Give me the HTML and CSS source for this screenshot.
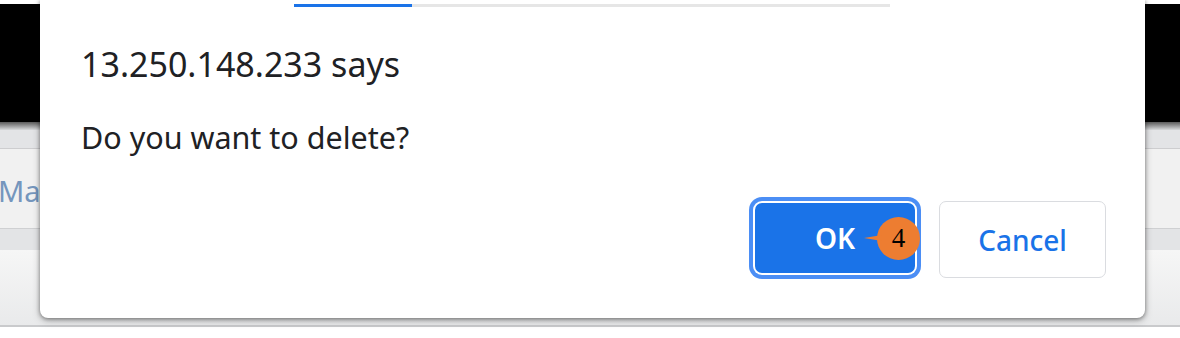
FILE: index.html
```html
<!DOCTYPE html>
<html>
<head>
    <title>Confirm</title>
    <meta charset='UTF-8'>
    <link rel="stylesheet" href="styles.css">
</head>
<body>
    <div class='page'>
        <div class='top-gap'></div>
        <div class='header-black'></div>
        <div class='header-fade'></div>
        <div class='toolbar'></div>
        <div class='tab-row'><span class='tab-label'>Manage</span></div>
        <div class='sub-band'></div>
        <div class='lower-area'></div>
        <div class='bottom-line'></div>
    </div>

    <div class='dialog'>
        <div class='progress'><div class='progress-fill'></div></div>
        <h1 class='dialog-title'>13.250.148.233 says</h1>
        <p class='dialog-msg'>Do you want to delete?</p>
        <div class='dialog-actions'>
            <button class='btn btn-ok'>OK
                <span class='step-badge'>4</span>
            </button>
            <button class='btn btn-cancel'>Cancel</button>
        </div>
    </div>
</body>
</html>
```

FILE: styles.css
```css
html, body { margin: 0; padding: 0; }
body { width: 1180px; height: 338px; overflow: hidden; background: #fff; font-family: "Noto Sans", "Open Sans", sans-serif; position: relative; }

/* page behind the dialog */
.page { display: flex; flex-direction: column; }
.top-gap { height: 4px; background: #fff; }
.header-black { height: 118px; background: #000; }
.header-fade { height: 8px; background: linear-gradient(#5a5a5a, #d9dadc); }
.toolbar { height: 18px; background: #e3e4e6; border-bottom: 1px solid #cdcdcf; }
.tab-row { height: 79px; background: #f1f1f1; border-bottom: 1px solid #cfd0d2; display: flex; align-items: center; overflow: hidden; }
.tab-label { font-size: 29px; color: #7596bd; margin-left: -2px; margin-top: 4px; white-space: nowrap; }
.sub-band { height: 21px; background: #e3e4e6; }
.lower-area { height: 75px; background: linear-gradient(#f6f6f6, #e9eaeb); }
.bottom-line { height: 2px; background: #c9cacc; }

/* alert dialog */
.dialog {
    position: absolute;
    left: 40px;
    top: 0;
    width: 1105px;
    height: 318px;
    background: #fff;
    border-radius: 0 0 8px 8px;
    box-shadow: 0 1px 4px rgba(0,0,0,0.45), 0 3px 8px rgba(0,0,0,0.2);
    box-sizing: border-box;
    padding: 0 39px 0 41px;
}
.progress { height: 3px; width: 596px; margin: 4px 0 0 213px; background: #e6e6e6; }
.progress-fill { width: 118px; height: 100%; background: #1a73e8; }
.dialog-title { margin: 37px 0 0; font-size: 34px; font-weight: 400; color: #202124; line-height: 40px; }
.dialog-msg { margin: 33px 0 0; font-size: 30.5px; color: #202124; line-height: 40px; }

.dialog-actions { display: flex; justify-content: flex-end; align-items: center; gap: 24px; margin-top: 44px; }
.btn {
    height: 77px;
    border-radius: 7px;
    font-family: inherit;
    font-size: 28px;
    font-weight: 600;
    cursor: pointer;
    box-sizing: border-box;
    padding: 0;
}
.btn-ok {
    position: relative;
    width: 160px;
    height: 70px;
    margin-top: -3px;
    border: none;
    background: #1a73e8;
    color: #fff;
    box-shadow: 0 0 0 2px #fff, 0 0 0 6px #4b8ef5;
}
.btn-cancel { width: 167px; background: #fff; color: #1a73e8; border: 1.5px solid #dadce0; font-weight: 500; }

/* step marker over the OK button */
.step-badge {
    position: absolute;
    left: 122px;
    top: 14px;
    width: 43px;
    height: 43px;
    border-radius: 50%;
    background: #ed7d31;
    color: #000;
    font-family: "Liberation Serif", serif;
    font-size: 27px;
    font-weight: 400;
    display: flex;
    align-items: center;
    justify-content: center;
}
.step-badge::before {
    content: "";
    position: absolute;
    left: -13px;
    top: 18px;
    border-style: solid;
    border-width: 3.5px 18px 3.5px 0;
    border-color: transparent #ed7d31 transparent transparent;
}
```
